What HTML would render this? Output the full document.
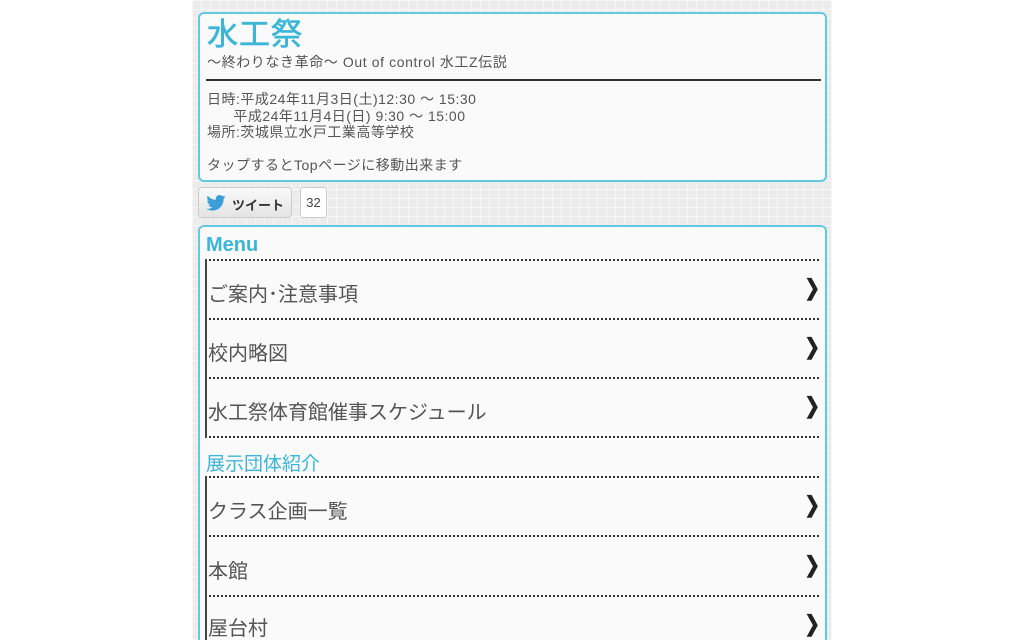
<!DOCTYPE html>
<html><head><meta charset="utf-8"><style>
*{margin:0;padding:0;box-sizing:border-box}
html,body{width:1024px;height:640px;overflow:hidden}
body{background:#fff;position:relative;font-family:"Liberation Sans","Noto Sans CJK JP",sans-serif;color:#444}
#pg{position:absolute;left:192px;top:0;width:640px;height:640px;overflow:hidden;background:#ececec;
background-image:linear-gradient(rgba(255,255,255,.5) 1px,transparent 1px),linear-gradient(90deg,rgba(255,255,255,.5) 1px,transparent 1px);background-size:9px 9px}
.box{position:absolute;left:6px;width:629px;background:#fafafa;border:2px solid #62c9e2;border-radius:6px}
.a{position:absolute;white-space:nowrap}
.dot{position:absolute;left:5px;right:6px;height:0;border-top:2px dotted #333}
.vb{position:absolute;left:5px;width:2px;background:#444}
.it{position:absolute;left:8px;font-size:20px;color:#555;line-height:24px}
.ch{position:absolute;right:4px;font-size:22px;font-weight:bold;color:#222;transform:scaleX(.85)}
</style></head><body><div id="pg">
<div class="box" style="top:12px;height:170px">
<div class="a" style="left:7px;top:4px;font-size:31px;line-height:34px;color:#3ab6d8;letter-spacing:1px;-webkit-text-stroke:.6px #3ab6d8">水工祭</div>
<div class="a" style="left:7px;top:40px;font-size:14px;line-height:17px;color:#555;letter-spacing:.6px">～終わりなき革命～ Out of control 水工Z伝説</div>
<div class="a" style="left:6px;top:65px;width:615px;height:2px;background:#333"></div>
<div class="a" style="left:7px;top:77px;font-size:14px;line-height:16.5px;color:#555;letter-spacing:.5px">日時:平成24年11月3日(土)12:30 ～ 15:30<br>&nbsp;&nbsp;&nbsp;&nbsp;&nbsp;&nbsp;平成24年11月4日(日) 9:30 ～ 15:00<br>場所:茨城県立水戸工業高等学校<br><br>タップするとTopページに移動出来ます</div>
</div>
<div class="a" style="left:6px;top:187px;width:94px;height:31px;border:1px solid #ccc;border-radius:4px;background:linear-gradient(#fafafa,#e4e4e4)">
<svg style="position:absolute;left:7px;top:7px" width="20" height="16" viewBox="0 0 24 20"><path fill="#3a9fd8" d="M24 2.4c-.9.4-1.8.6-2.8.8 1-.6 1.8-1.6 2.2-2.7-1 .6-2 1-3.1 1.2C19.3.7 18 0 16.6 0c-2.7 0-4.9 2.2-4.9 4.9 0 .4 0 .8.1 1.1C7.7 5.8 4.1 3.9 1.7.9c-.4.7-.7 1.6-.7 2.5 0 1.7.9 3.2 2.2 4.1-.8 0-1.6-.2-2.2-.6v.1c0 2.4 1.7 4.4 3.9 4.8-.4.1-.8.2-1.3.2-.3 0-.6 0-.9-.1.6 2 2.4 3.4 4.6 3.4-1.7 1.3-3.8 2.1-6.1 2.1-.4 0-.8 0-1.2-.1 2.2 1.4 4.8 2.2 7.5 2.2 9.1 0 14-7.5 14-14v-.6c1-.7 1.8-1.6 2.4-2.5z"/></svg>
<div class="a" style="left:33px;top:7px;font-size:13px;font-weight:bold;color:#333">ツイート</div></div>
<div class="a" style="left:108px;top:187px;width:27px;height:31px;border:1px solid #ccc;border-radius:3px;background:#fff;font-size:13px;color:#444;text-align:center;line-height:29px">32</div>
<div class="box" style="top:225px;height:415px;border-bottom:none;border-radius:6px 6px 0 0;overflow:hidden">
<div class="a" style="left:6px;top:6px;font-size:20px;font-weight:bold;color:#3ab6d8;line-height:24px">Menu</div>
<div class="dot" style="top:32px"></div><div class="dot" style="top:91px"></div><div class="dot" style="top:150px"></div><div class="dot" style="top:209px"></div>
<div class="vb" style="top:32px;height:179px"></div>
<div class="it" style="top:56px">ご案内･注意事項</div><div class="ch" style="top:48px">❯</div>
<div class="it" style="top:115px">校内略図</div><div class="ch" style="top:107px">❯</div>
<div class="it" style="top:174px">水工祭体育館催事スケジュール</div><div class="ch" style="top:166px">❯</div>
<div class="a" style="left:6px;top:226px;font-size:19px;color:#3ab6d8;line-height:24px">展示団体紹介</div>
<div class="dot" style="top:249px"></div><div class="dot" style="top:308px"></div><div class="dot" style="top:368px"></div>
<div class="vb" style="top:249px;height:170px"></div>
<div class="it" style="top:273px">クラス企画一覧</div><div class="ch" style="top:265px">❯</div>
<div class="it" style="top:333px">本館</div><div class="ch" style="top:325px">❯</div>
<div class="it" style="top:390px">屋台村</div><div class="ch" style="top:384px">❯</div>
</div>
</div></body></html>
